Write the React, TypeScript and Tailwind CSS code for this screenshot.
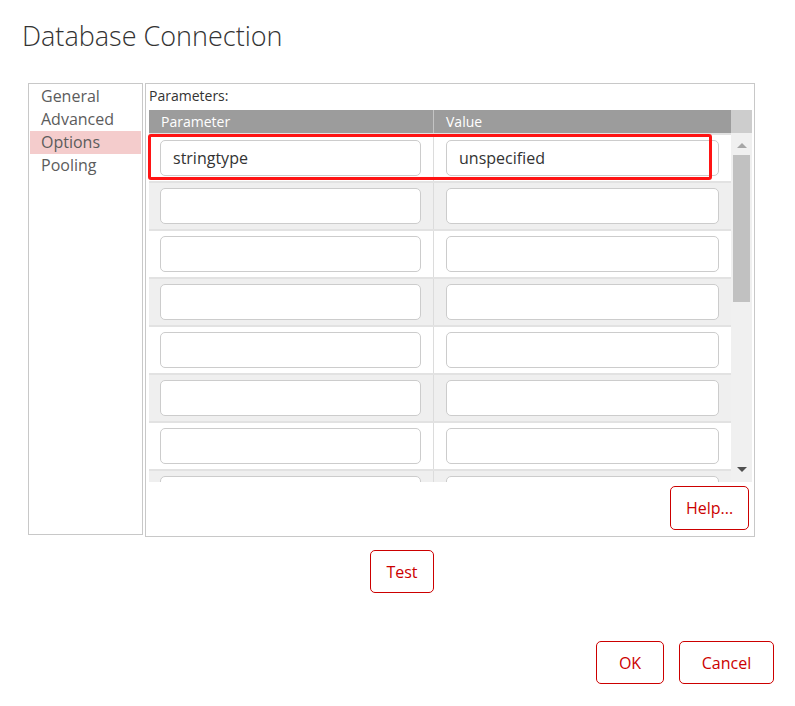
import React from 'react'

const navItems = ['General', 'Advanced', 'Options', 'Pooling']

const rows = [
  { name: 'stringtype', value: 'unspecified' },
  { name: '', value: '' },
  { name: '', value: '' },
  { name: '', value: '' },
  { name: '', value: '' },
  { name: '', value: '' },
  { name: '', value: '' },
  { name: '', value: '' },
]

function Field({ value }: { value: string }) {
  return (
    <input
      readOnly
      value={value}
      className="h-[36px] w-full rounded-[5px] border border-[#cccccc] bg-white pl-[12px] text-[16px] text-[#333] outline-none font-['Open_Sans']"
    />
  )
}

function RedButton({ label, className }: { label: string; className: string }) {
  return (
    <button
      className={
        'rounded-[5px] border border-[#cc0000] bg-white text-[16px] text-[#cc0000] font-["Open_Sans"] ' +
        className
      }
    >
      {label}
    </button>
  )
}

export default function App() {
  return (
    <div className="relative h-[706px] w-[795px] bg-white font-['Open_Sans',sans-serif] text-[#333]">
      <h1 className="pl-[22px] pt-[17px] text-[27px] font-light leading-[38px] text-[#333]">
        Database Connection
      </h1>

      <div className="mt-[28px] flex items-start gap-[2px] pl-[28px]">
        {/* left nav */}
        <div className="h-[452px] w-[115px] border border-[#c8c8c8] p-px">
          {navItems.map((item) => (
            <div
              key={item}
              className={
                item === 'Options'
                  ? 'h-[23px] bg-[#f4cccc] pl-[11px] text-[16px] leading-[23px] text-[#5c5c5c]'
                  : 'h-[23px] pl-[11px] text-[16px] leading-[23px] text-[#5c5c5c]'
              }
            >
              {item}
            </div>
          ))}
        </div>

        {/* options panel */}
        <div className="flex h-[454px] w-[610px] flex-col border border-[#c8c8c8] pl-[3px] pr-[2px] pt-[2px]">
          <div className="mb-[4px] text-[14px] leading-[20px] text-[#333]">Parameters:</div>

          {/* header */}
          <div className="flex h-[23px] text-[14px] leading-[23px] text-white">
            <div className="w-[285px] border-r border-[#c4c4c4] bg-[#9c9c9c] pl-[12px]">Parameter</div>
            <div className="w-[297px] bg-[#9c9c9c] pl-[12px]">Value</div>
            <div className="w-[21px] bg-[#cdcdcd]" />
          </div>

          {/* body */}
          <div className="flex h-[349px]">
            <div className="w-[582px] overflow-hidden">
              {rows.map((row, i) => (
                <div
                  key={i}
                  className={
                    i % 2 === 1
                      ? 'flex h-[48px] border-t-2 border-[#e2e2e2] bg-[#efefef]'
                      : 'flex h-[48px] border-t-2 border-[#e2e2e2] bg-white'
                  }
                >
                  <div className="w-[285px] shrink-0 border-r border-[#dcdcdc] pl-[11px] pr-[12px] pt-[5px]">
                    <Field value={row.name} />
                  </div>
                  <div className="w-[297px] shrink-0 px-[12px] pt-[5px]">
                    <Field value={row.value} />
                  </div>
                </div>
              ))}
            </div>

            {/* scrollbar */}
            <div className="flex w-[21px] flex-col items-center bg-[#f0f0f0]">
              <div className="mt-[10px] h-0 w-0 border-x-[5px] border-b-[5px] border-x-transparent border-b-[#a6a6a6]" />
              <div className="mt-[7px] h-[147px] w-[17px] bg-[#c1c1c1]" />
              <div className="flex-1" />
              <div className="mb-[10px] h-0 w-0 border-x-[5px] border-t-[5px] border-x-transparent border-t-[#505050]" />
            </div>
          </div>

          <div className="mr-[3px] mt-[4px] flex justify-end">
            <RedButton label="Help..." className="h-[44px] w-[79px]" />
          </div>
        </div>
      </div>

      <div className="mt-[13px] pl-[370px]">
        <RedButton label="Test" className="h-[43px] w-[64px]" />
      </div>

      <div className="mt-[48px] flex justify-end gap-[15px] pr-[21px]">
        <RedButton label="OK" className="h-[43px] w-[68px]" />
        <RedButton label="Cancel" className="h-[43px] w-[95px]" />
      </div>

      {/* selection highlight drawn over the first row */}
      <div className="pointer-events-none absolute left-[148px] top-[134px] h-[46px] w-[564px] rounded-[3px] border-[3px] border-[#ff1414]" />
    </div>
  )
}
